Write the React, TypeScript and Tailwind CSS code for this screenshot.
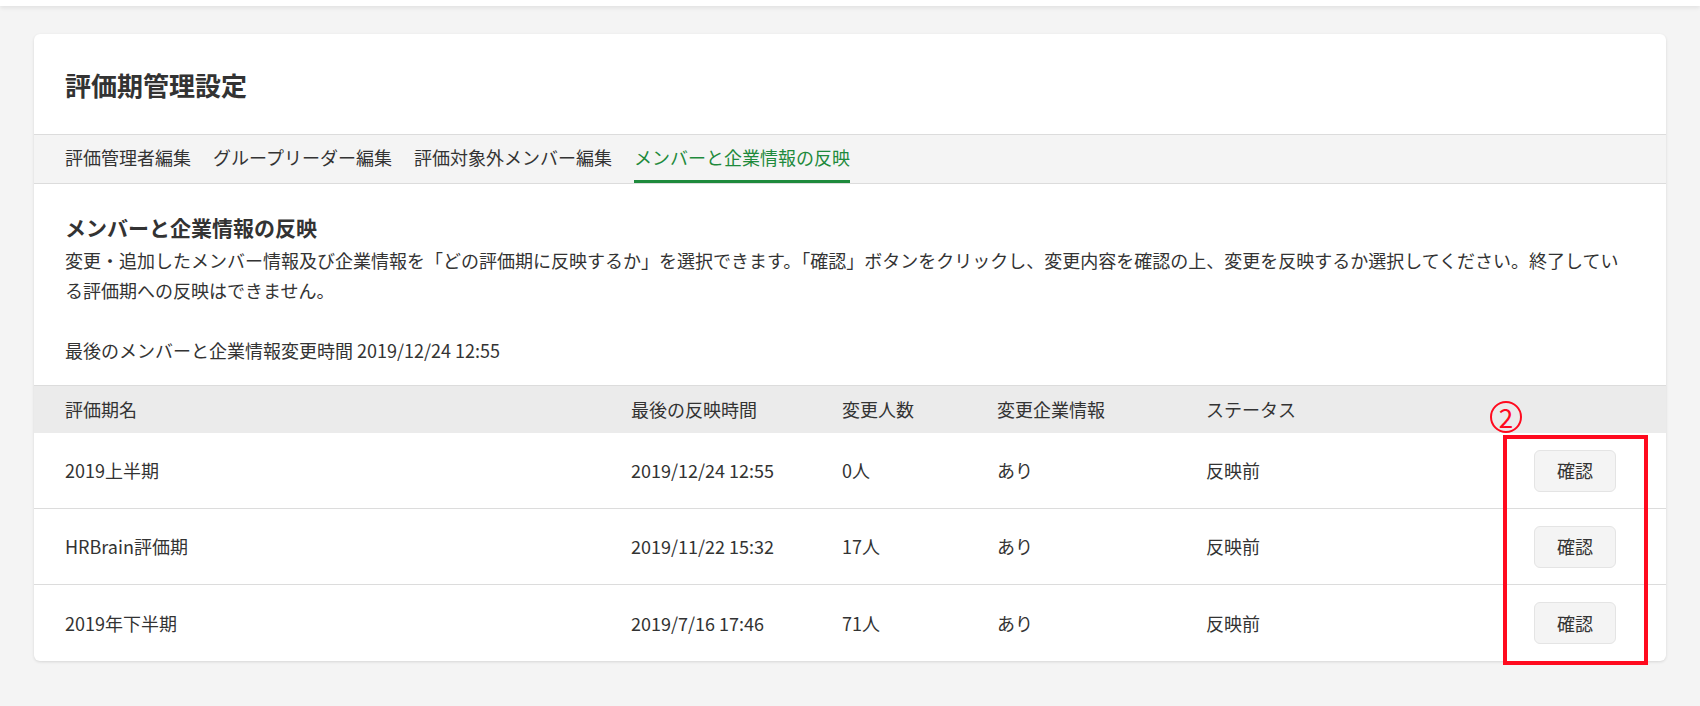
export default function App() {
  const rows = [
    { name: "2019上半期", time: "2019/12/24 12:55", count: "0人" },
    { name: "HRBrain評価期", time: "2019/11/22 15:32", count: "17人" },
    { name: "2019年下半期", time: "2019/7/16 17:46", count: "71人" },
  ];
  const tabs = ["評価管理者編集", "グループリーダー編集", "評価対象外メンバー編集", "メンバーと企業情報の反映"];
  return (
    <div
      className="min-h-[706px] bg-[#f4f4f4] text-[#333]"
      style={{ fontFamily: '"Noto Sans CJK JP", "Noto Sans", sans-serif' }}
    >
      <div className="h-[6px] bg-white shadow-[0_2px_4px_rgba(0,0,0,0.08)]" />
      <div className="px-[34px] pt-[28px]">
        <div className="relative bg-white rounded-md shadow-[0_1px_3px_rgba(0,0,0,0.12)]">
          <div className="h-[100px] flex items-center px-[31px]">
            <h1 className="text-[26px] font-bold">評価期管理設定</h1>
          </div>
          <div className="h-[50px] bg-[#f4f4f4] border-y border-[#dcdcdc] flex px-[31px] gap-[22px]">
            {tabs.map((t, i) => (
              <div
                key={t}
                className={
                  "flex items-center text-[18px] border-b-[3px] " +
                  (i === 3 ? "border-[#1e8a3c] text-[#1e8a3c]" : "border-transparent text-[#333]")
                }
              >
                {t}
              </div>
            ))}
          </div>
          <div className="px-[31px] pt-[27px] pb-[20px]">
            <h2 className="text-[21px] font-bold leading-[32px]">メンバーと企業情報の反映</h2>
            <p className="text-[18px] leading-[30px] mt-[2px]">
              変更・追加したメンバー情報及び企業情報を「どの評価期に反映するか」を選択できます。「確認」ボタンをクリックし、変更内容を確認の上、変更を反映するか選択してください。終了している評価期への反映はできません。
            </p>
            <p className="text-[18px] leading-[30px] mt-[30px]">最後のメンバーと企業情報変更時間 2019/12/24 12:55</p>
          </div>
          <div className="h-[48px] bg-[#ebebeb] border-t border-[#dcdcdc] flex items-center text-[18px] px-[31px]">
            <div className="w-[566px]">評価期名</div>
            <div className="w-[211px]">最後の反映時間</div>
            <div className="w-[155px]">変更人数</div>
            <div className="w-[209px]">変更企業情報</div>
            <div>ステータス</div>
          </div>
          {rows.map((r, i) => (
            <div
              key={r.name}
              className={"h-[76px] flex items-center text-[18px] px-[31px] " + (i < 2 ? "border-b border-[#dcdcdc]" : "")}
            >
              <div className="w-[566px]">{r.name}</div>
              <div className="w-[211px]">{r.time}</div>
              <div className="w-[155px]">{r.count}</div>
              <div className="w-[209px]">あり</div>
              <div className="flex-1">反映前</div>
              <button className="w-[82px] h-[42px] mr-[19px] rounded-md bg-[#f4f4f4] border border-[#e4e4e4] text-[18px]">
                確認
              </button>
            </div>
          ))}
          <div className="absolute left-[1469px] bottom-[-4px] w-[145px] h-[230px] border-[4px] border-[#ff0a1e]" />
          <div className="absolute left-[1456px] bottom-[228px] w-[32px] h-[32px] rounded-full border-2 border-[#ff0a1e] text-[#ff0a1e] flex items-center justify-center text-[26px] leading-none">
            2
          </div>
        </div>
      </div>
    </div>
  );
}
